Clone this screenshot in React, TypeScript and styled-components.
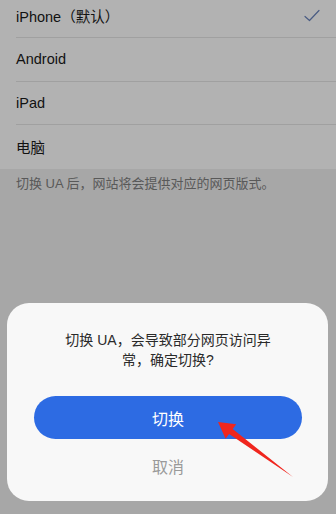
import React from "react";
import styled, { createGlobalStyle } from "styled-components";

const GlobalStyle = createGlobalStyle`
    html, body {
        margin: 0;
        padding: 0;
        height: 100%;
        overflow: hidden;
        background: #f0f0f0;
    }
    body {
        font-family: "Liberation Sans", "Noto Sans CJK SC", sans-serif;
        -webkit-font-smoothing: antialiased;
    }
`;

const Page = styled.div`
    display: flex;
    flex-direction: column;
    height: 514px;
    background: #f0f0f0;
`;

const List = styled.div`
    display: flex;
    flex-direction: column;
    margin-top: -5.5px;
    background: #ffffff;
`;

const Row = styled.div<{ last?: boolean }>`
    display: flex;
    align-items: center;
    justify-content: space-between;
    height: 43.5px;
    margin-left: 16px;
    padding-right: 16px;
    box-sizing: border-box;
    font-size: 14.5px;
    color: #1a1a1a;
    border-bottom: ${({ last }) => (last ? "none" : "1px solid #e6e6e6")};
`;

const Hint = styled.div`
    padding: 6px 16px;
    font-size: 13px;
    line-height: 18px;
    color: #808080;
`;

const Overlay = styled.div`
    position: fixed;
    inset: 0;
    background: rgba(0, 0, 0, 0.3);
`;

const Dialog = styled.div`
    position: fixed;
    left: 7px;
    right: 8px;
    bottom: 13px;
    display: flex;
    flex-direction: column;
    align-items: center;
    padding: 27px 26px 21px 27px;
    background: #f8f8f8;
    border-radius: 22px;
`;

const Message = styled.div`
    font-size: 14px;
    line-height: 20px;
    color: #2a2a2a;
    text-align: center;
`;

const PrimaryButton = styled.button`
    width: 100%;
    height: 43px;
    margin-top: 26px;
    border: none;
    border-radius: 22px;
    background: #2d6be3;
    color: #ffffff;
    font-family: inherit;
    font-size: 16px;
`;

const CancelButton = styled.button`
    margin-top: 17px;
    padding: 0;
    border: none;
    background: none;
    color: #9a9a9a;
    font-family: inherit;
    font-size: 16px;
    line-height: 24px;
`;

const Arrow = styled.svg`
    position: fixed;
    left: 0;
    top: 0;
    pointer-events: none;
`;

const Check = () => (
    <svg width="16" height="13" viewBox="0 0 16 13">
        <path d="M1 7.5 L5.5 11.5 L15 1.5" fill="none" stroke="#6a84bc" strokeWidth="1.2" strokeLinecap="round" strokeLinejoin="round" />
    </svg>
);

const rows = ["iPhone（默认）", "Android", "iPad", "电脑"];

const App = () => {
    return (
        <>
            <GlobalStyle />
            <Page>
                <List>
                    {rows.map((title, key) => (
                        <Row key={key} last={key === rows.length - 1}>
                            <span>{title}</span>
                            {key === 0 && <Check />}
                        </Row>
                    ))}
                </List>
                <Hint>切换 UA 后，网站将会提供对应的网页版式。</Hint>
            </Page>
            <Overlay />
            <Dialog>
                <Message>
                    切换 UA，会导致部分网页访问异<br />
                    常，确定切换?
                </Message>
                <PrimaryButton>切换</PrimaryButton>
                <CancelButton>取消</CancelButton>
            </Dialog>
            {/* red annotation arrow */}
            <Arrow width="336" height="514" viewBox="0 0 336 514">
                <polygon
                    points="218,422 225.6,438.8 229.1,433.9 293,477 232.7,429.1 236.2,424.2"
                    fill="#f0261e"
                />
            </Arrow>
        </>
    );
};

export default App;
